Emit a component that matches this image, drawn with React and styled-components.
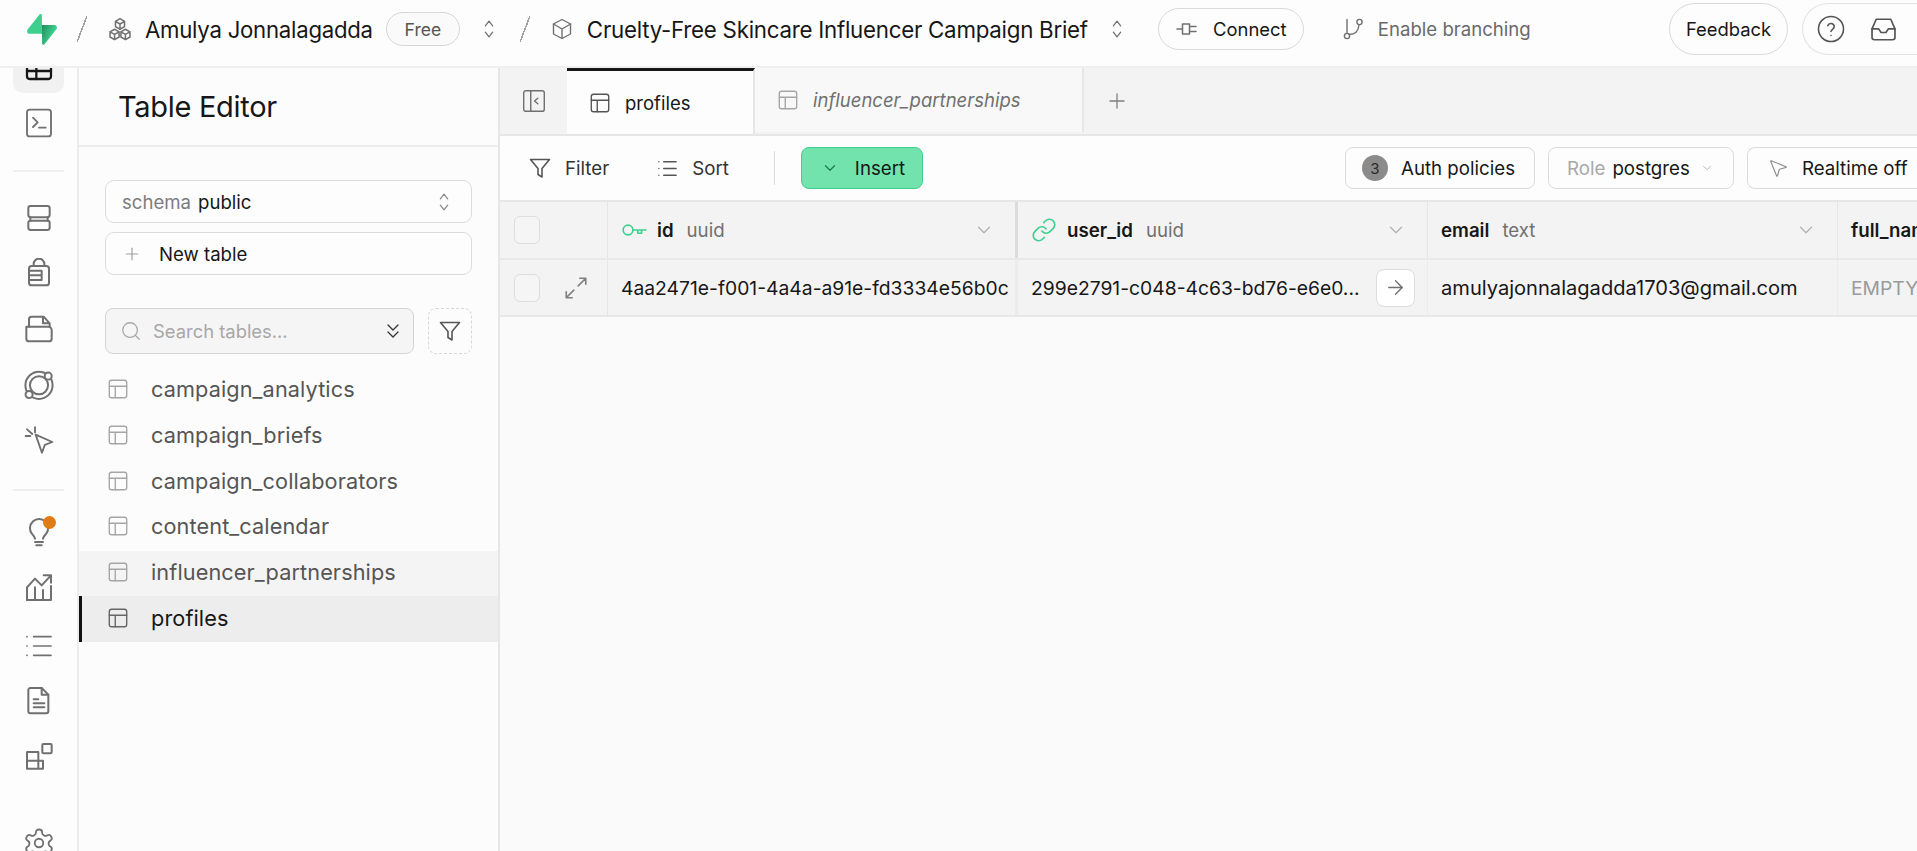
import React from "react";
import styled, { createGlobalStyle } from "styled-components";
import {
  ArrowRight,
  ChevronDown,
  ChevronsDown,
  Link,
  List,
  MousePointer2,
  Plus,
  Search,
} from "lucide-react";

const GlobalStyle = createGlobalStyle`
  html, body {
    margin: 0;
    height: 100%;
    overflow: hidden;
    background: #fcfcfc;
  }
  body {
    font-family: Inter, "Liberation Sans", sans-serif;
    color: #171717;
    -webkit-font-smoothing: antialiased;
  }
  * { box-sizing: border-box; }
`;

const Page = styled.div`
  width: 1917px;
  height: 851px;
  display: flex;
  flex-direction: column;
  overflow: hidden;
`;

const TopBar = styled.header`
  position: relative;
  z-index: 2;
  flex: 0 0 68px;
  display: flex;
  align-items: center;
  padding: 0 0 8px 27px;
  background: #fdfdfd;
  border-bottom: 2px solid #efefef;
`;

const Slash = styled.span`
  width: 10px;
  height: 26px;
  margin-left: ${(p) => p.$ml}px;
  background: linear-gradient(
    to bottom right,
    transparent 46%,
    #a0a0a0 46%,
    #a0a0a0 54%,
    transparent 54%
  );
`;

const Crumb = styled.span`
  font-size: ${(p) => p.$size}px;
  letter-spacing: -0.25px;
  white-space: nowrap;
  margin-left: ${(p) => p.$ml}px;
`;

const PlanPill = styled.span`
  height: 34px;
  width: 74px;
  margin-left: 13px;
  display: flex;
  align-items: center;
  justify-content: center;
  border: 1px solid #d6d6d6;
  border-radius: 17px;
  background: #fafafa;
  color: #555;
  font-size: 17.5px;
`;

const IconSlot = styled.span`
  display: inline-flex;
  flex-shrink: 0;
  margin-left: ${(p) => p.$ml || 0}px;
  color: ${(p) => p.$color || "#707070"};
`;

const Pill = styled.button`
  height: ${(p) => p.$h}px;
  width: ${(p) => p.$w}px;
  margin-left: ${(p) => p.$ml}px;
  display: flex;
  align-items: center;
  justify-content: center;
  gap: 14px;
  padding: 0;
  border: 1px solid #d9d9d9;
  border-radius: 26px;
  background: #fdfdfd;
  color: #171717;
  font: inherit;
  font-size: 18.4px;
`;

const BranchLabel = styled.span`
  margin-left: 13px;
  color: #6a6a6a;
  font-size: 18.6px;
  white-space: nowrap;
`;

const RightCluster = styled.div`
  margin-left: 14px;
  width: 115px;
  height: 52px;
  display: flex;
  align-items: center;
  gap: 23px;
  padding-left: 13px;
  border: 1px solid #e2e2e2;
  border-right: none;
  border-radius: 26px 0 0 26px;
`;

const Spacer = styled.div`
  flex: 1;
`;

const Body = styled.div`
  flex: 1;
  display: flex;
  min-height: 0;
`;

const Nav = styled.nav`
  flex: 0 0 79px;
  border-right: 2px solid #ececec;
  background: #fdfdfd;
  overflow: hidden;
`;

const NavInner = styled.div`
  margin-top: -27px;
  padding: 0 13px;
  display: flex;
  flex-direction: column;
  gap: 4px;
`;

const NavItem = styled.div`
  flex: 0 0 52px;
  height: 52px;
  display: flex;
  align-items: center;
  justify-content: center;
  position: relative;
  border-radius: 10px;
  color: ${(p) => (p.$active ? "#171717" : "#707070")};
  background: ${(p) => (p.$active ? "#f1f1f1" : "transparent")};
  margin-top: ${(p) => p.$mt || 0}px;
`;

const NavDivider = styled.div`
  height: 2px;
  background: #efefef;
  margin: ${(p) => p.$mt}px 0 ${(p) => p.$mb}px;
`;

const Badge = styled.span`
  position: absolute;
  top: 8px;
  left: 30px;
  width: 13px;
  height: 13px;
  border-radius: 50%;
  background: #e17b17;
`;

const Side = styled.aside`
  flex: 0 0 421px;
  background: #fcfcfc;
  border-right: 2px solid #e6e6e6;
`;

const SideHead = styled.div`
  height: 79px;
  display: flex;
  align-items: center;
  padding-left: 39px;
  border-bottom: 2px solid #ededed;
  font-size: 29px;
  letter-spacing: -0.3px;
`;

const SideControls = styled.div`
  padding: 33px 26px 0;
  display: flex;
  flex-direction: column;
`;

const FieldBox = styled.div`
  height: 43px;
  display: flex;
  align-items: center;
  border: 1px solid #dcdcdc;
  border-radius: 9px;
  background: #fdfdfd;
  margin-bottom: 9px;
  font-size: 18.6px;
  padding: 0 16px;
`;

const Muted = styled.span`
  color: #7c7c7c;
  margin-right: 7px;
`;

const FieldLabel = styled.span`
  margin-left: ${(p) => p.$ml}px;
`;

const SearchRow = styled.div`
  display: flex;
  gap: 14px;
  margin-top: 24px;
`;

const SearchBox = styled.div`
  flex: 0 0 309px;
  height: 46px;
  display: flex;
  align-items: center;
  padding: 0 8px 0 14px;
  border: 1px solid #d4d4d4;
  border-radius: 8px;
  background: #f5f5f5;
  color: #a8a8a8;
  font-size: 18.4px;
`;

const DashedButton = styled.div`
  width: 44px;
  height: 46px;
  display: flex;
  align-items: center;
  justify-content: center;
  border: 1px dashed #d8d8d8;
  border-radius: 8px;
  color: #555;
`;

const TableList = styled.ul`
  list-style: none;
  margin: 14px 0 0;
  padding: 0;
`;

const TableItem = styled.li`
  height: 45.7px;
  display: flex;
  align-items: center;
  gap: 22px;
  padding: 0 0 3px ${(p) => (p.$active ? 25 : 28)}px;
  font-size: 21.7px;
  letter-spacing: 0.1px;
  color: ${(p) => (p.$active ? "#171717" : "#555")};
  background: ${(p) =>
    p.$active ? "#ededed" : p.$hover ? "#f4f4f4" : "transparent"};
  border-left: ${(p) => (p.$active ? "3px solid #111" : "none")};
`;

const Main = styled.main`
  flex: 1;
  min-width: 0;
  display: flex;
  flex-direction: column;
  background: #fafafa;
`;

const TabBar = styled.div`
  flex: 0 0 66px;
  display: flex;
  background: #f3f3f3;
  border-bottom: 2px solid #e6e6e6;
`;

const CollapseTab = styled.div`
  flex: 0 0 67px;
  display: flex;
  align-items: center;
  justify-content: center;
  color: #707070;
`;

const Tab = styled.div`
  flex: 0 0 ${(p) => p.$w}px;
  height: ${(p) => (p.$active ? 66 : 64)}px;
  display: flex;
  align-items: center;
  gap: 14px;
  padding-left: 22px;
  font-size: 18.5px;
  background: ${(p) => (p.$active ? "#fdfdfd" : "#f8f8f8")};
  color: ${(p) => (p.$active ? "#171717" : "#707070")};
  font-style: ${(p) => (p.$active ? "normal" : "italic")};
  border-top: ${(p) => (p.$active ? "3px solid #171717" : "none")};
  border-right: 2px solid #e6e6e6;
`;

const AddTab = styled.div`
  flex: 0 0 66px;
  display: flex;
  align-items: center;
  justify-content: center;
  color: #808080;
`;

const Toolbar = styled.div`
  flex: 0 0 66px;
  display: flex;
  align-items: center;
  padding-left: 28px;
  background: #fdfdfd;
  border-bottom: 2px solid #e6e6e6;
`;

const ToolText = styled.div`
  display: flex;
  align-items: center;
  gap: 13px;
  font-size: 18.7px;
  color: #333;
  margin-right: ${(p) => p.$mr}px;
`;

const ToolDivider = styled.div`
  width: 1px;
  height: 34px;
  background: #dcdcdc;
`;

const InsertButton = styled.button`
  margin-left: 26px;
  width: 122px;
  height: 42px;
  display: flex;
  align-items: center;
  gap: 16px;
  padding: 0 0 0 19px;
  border: 1px solid #3ecf8e;
  border-radius: 8px;
  background: #72e3ad;
  color: #171717;
  font: inherit;
  font-size: 18.7px;
`;

const ToolButton = styled.div`
  width: ${(p) => p.$w}px;
  height: 42px;
  display: flex;
  align-items: center;
  gap: 13px;
  padding-left: ${(p) => p.$pl}px;
  margin-left: 13px;
  border: 1px solid #dcdcdc;
  border-right: ${(p) => (p.$open ? "none" : "1px solid #dcdcdc")};
  border-radius: ${(p) => (p.$open ? "8px 0 0 8px" : "8px")};
  background: #fdfdfd;
  font-size: 18.7px;
  white-space: nowrap;
`;

const Count = styled.span`
  width: 26px;
  height: 26px;
  display: flex;
  align-items: center;
  justify-content: center;
  border-radius: 50%;
  background: #8b8b8b;
  color: #2a2a2a;
  font-size: 15px;
`;

const RoleText = styled.span`
  color: #171717;
  span {
    color: #a8a8a8;
    margin-right: 7px;
  }
`;

const GridRow = styled.div`
  flex: 0 0 ${(p) => p.$h}px;
  display: grid;
  grid-template-columns: 108px 410px 410px 410px 410px;
  background: #f3f3f3;
  border-bottom: 2px solid #e8e8e8;
`;

const SelectCell = styled.div`
  display: flex;
  align-items: center;
  gap: 23px;
  padding-left: 14px;
  border-right: 1px solid #e6e6e6;
  color: #808080;
`;

const Check = styled.span`
  width: 26px;
  height: 28px;
  border: 1px solid #dedede;
  border-radius: 6px;
  background: #f5f5f5;
`;

const HeadCell = styled.div`
  display: flex;
  align-items: center;
  gap: 10px;
  padding: 0 20px 0 13px;
  border-right: ${(p) => (p.$thick ? "3px solid #dcdcdc" : "1px solid #e6e6e6")};
  font-size: 18.7px;
  white-space: nowrap;
  overflow: hidden;
`;

const ColName = styled.b`
  font-weight: 600;
  color: #171717;
`;

const ColType = styled.span`
  margin-left: 3px;
  color: #707070;
  flex: 1;
`;

const DataCell = styled.div`
  display: flex;
  align-items: center;
  justify-content: space-between;
  padding: 0 12px 0 13px;
  border-right: ${(p) => (p.$thick ? "3px solid #ececec" : "1px solid #ececec")};
  font-size: ${(p) => p.$size || 19.3}px;
  color: ${(p) => (p.$empty ? "#9a9a9a" : "#171717")};
  white-space: nowrap;
  overflow: hidden;
`;

const JumpButton = styled.span`
  flex: 0 0 39px;
  height: 38px;
  display: flex;
  align-items: center;
  justify-content: center;
  border: 1px solid #dcdcdc;
  border-radius: 8px;
  background: #fff;
  color: #707070;
`;

const Glyph = ({ size = 26, width = 1.6, children, fill = "none" }) => (
  <svg
    width={size}
    height={size}
    viewBox="0 0 24 24"
    fill={fill}
    stroke="currentColor"
    strokeWidth={width}
    strokeLinecap="round"
    strokeLinejoin="round"
  >
    {children}
  </svg>
);

// table glyph used in sidebar, tabs and nav
const TableGlyph = ({ size = 22, width = 1.5 }) => (
  <Glyph size={size} width={width}>
    <rect x="2.5" y="2.5" width="19" height="19" rx="2.5" />
    <path d="M2.5 9h19M9 9v12.5" />
  </Glyph>
);

const Updown = ({ size = 22 }) => (
  <Glyph size={size} width={1.4}>
    <path d="M8 8.5 12 3.5l4 5M8 15.5l4 5 4-5" />
  </Glyph>
);

const FilterGlyph = ({ size = 25 }) => (
  <Glyph size={size} width={1.6}>
    <path d="M2.5 3.5h19l-7.5 9v8.5l-4-2.5v-6z" />
  </Glyph>
);

const Logo = () => (
  <svg width="30" height="31" viewBox="0 0 109 113">
    <defs>
      <linearGradient id="bolt" x1="54" y1="55" x2="95" y2="72" gradientUnits="userSpaceOnUse">
        <stop offset="0" stopColor="#249361" />
        <stop offset="1" stopColor="#3ecf8e" />
      </linearGradient>
    </defs>
    <path
      d="M63.7 110.3c-2.9 3.6-8.7 1.6-8.7-3L54 40.1h45.2c8.2 0 12.8 9.5 7.7 15.9z"
      fill="url(#bolt)"
    />
    <path
      d="M45.3 2.1c2.9-3.6 8.7-1.6 8.7 3l.5 67.2H9.8c-8.2 0-12.8-9.5-7.7-15.9z"
      fill="#3ecf8e"
    />
  </svg>
);

const OrgGlyph = () => (
  <Glyph size={26} width={1.4}>
    <path d="M12 2.5 16.2 5v4.8L12 12.2 7.8 9.8V5zM7.8 5 12 7.4 16.2 5M12 7.4v4.8" />
    <path d="M7 12.2 11.2 14.6v4.8L7 21.8l-4.2-2.4v-4.8zM2.8 14.6 7 17l4.2-2.4M7 17v4.8" />
    <path d="M17 12.2l4.2 2.4v4.8L17 21.8l-4.2-2.4v-4.8zM12.8 14.6 17 17l4.2-2.4M17 17v4.8" />
  </Glyph>
);

const BoxGlyph = () => (
  <Glyph size={24} width={1.4}>
    <path d="M12 2.5 20.5 7v10L12 21.5 3.5 17V7z" />
    <path d="M3.5 7 12 12l8.5-5M12 12v9.5" />
  </Glyph>
);

const PlugGlyph = () => (
  <Glyph size={24} width={1.5}>
    <path d="M2 12h5M7.5 7h7v10h-7zM14.5 9.5H21M14.5 14.5H21" />
  </Glyph>
);

const BranchGlyph = () => (
  <Glyph size={24} width={1.4}>
    <circle cx="6" cy="19" r="2.6" />
    <circle cx="18.5" cy="5" r="2.6" />
    <path d="M6 16.4V2.5M8 17.5c6 0 9.5-4 10-9.8" />
  </Glyph>
);

const HelpGlyph = () => (
  <Glyph size={30} width={1.25}>
    <circle cx="12" cy="12" r="10" />
    <path d="M9.4 9.3a2.7 2.7 0 0 1 5.2.9c0 1.8-2.6 2.2-2.6 3.8" />
    <path d="M12 17.2h.01" />
  </Glyph>
);

const InboxGlyph = () => (
  <Glyph size={29} width={1.4}>
    <path d="M6 3.5h12l3.5 8v7a2 2 0 0 1-2 2h-15a2 2 0 0 1-2-2v-7z" />
    <path d="M2.5 11.5H8l2 3h4l2-3h5.5" />
  </Glyph>
);

const KeyGlyph = () => (
  <Glyph size={26} width={1.5}>
    <circle cx="6.5" cy="12" r="4.5" />
    <path d="M11 12h12M15.5 12v3h3.5v-3" />
  </Glyph>
);

const ExpandGlyph = () => (
  <Glyph size={26} width={1.5}>
    <path d="M14 10l7-7M15.5 3H21v5.5M10 14l-7 7M3 15.5V21h5.5" />
  </Glyph>
);

const CollapseGlyph = () => (
  <Glyph size={26} width={1.3}>
    <rect x="2.5" y="2.5" width="19" height="19" rx="2" />
    <path d="M9 2.5v19M15.5 9.5l-3 2.5 3 2.5" />
  </Glyph>
);

function TableEditorGlyph() {
  return (
    <Glyph size={32} width={1.7}>
      <rect x="3" y="3" width="18" height="18" rx="2" />
      <path d="M3 9h18M3 15h18M10 9v12" />
    </Glyph>
  );
}

const navIcons = {
  table: <TableEditorGlyph />,
  sql: (
    <Glyph size={32} width={1.4}>
      <rect x="3" y="2" width="18" height="20" rx="2" />
      <path d="M7.5 8l3.5 3.5-3.5 3.5M12 15.5h5" />
    </Glyph>
  ),
  database: (
    <Glyph size={32} width={1.5}>
      <rect x="4" y="3" width="16" height="8.4" rx="1.6" />
      <rect x="4" y="14" width="16" height="7" rx="1.6" />
      <path d="M5.5 11.4v2.6M18.5 11.4v2.6" />
    </Glyph>
  ),
  lock: (
    <Glyph size={32} width={1.5}>
      <rect x="4.5" y="6" width="15" height="14.5" rx="2" />
      <path d="M8 6V4.5a4 4 0 0 1 8 0V6M4.5 9.5H14v7H4.5M4.5 13h9.5" />
    </Glyph>
  ),
  storage: (
    <Glyph size={32} width={1.5}>
      <path d="M2.5 9.5h16.5a2.5 2.5 0 0 1 2.5 2.5v6.5a2 2 0 0 1-2 2h-15a2 2 0 0 1-2-2z" />
      <path d="M4.5 9.5V4a2 2 0 0 1 2-2h9l4.5 5v2.5M15 2v5h5" />
    </Glyph>
  ),
  edge: (
    <Glyph size={34} width={1.4}>
      <circle cx="12" cy="11.5" r="9.6" />
      <circle cx="12" cy="11.5" r="6.4" />
      <circle cx="18.5" cy="5" r="2.5" fill="#fdfdfd" />
      <circle cx="5" cy="18" r="2.5" fill="#fdfdfd" />
    </Glyph>
  ),
  realtime: (
    <Glyph size={32} width={1.4}>
      <path d="M9.5 6.5 22 12l-5.6 2.1-2.2 6z" />
      <path d="M3 2.5 7 6M9 .8v4M2 7.5h3.5" />
    </Glyph>
  ),
  report: (
    <Glyph size={32} width={1.5}>
      <path d="M3 19.5V10l6-6.5 5 5 7-7.5M15.5 1H21v5.5" />
      <path d="M3 19.5h18V9M9 19.5V10M15 19.5V12" />
    </Glyph>
  ),
  logs: <List size={32} strokeWidth={1.3} />,
  docs: (
    <Glyph size={32} width={1.5}>
      <path d="M5.5 1.5H14l5 5V19a1.5 1.5 0 0 1-1.5 1.5h-12A1.5 1.5 0 0 1 4 19V3a1.5 1.5 0 0 1 1.5-1.5z" />
      <path d="M14 1.5v5h5M8 10h3.5M8 13h8M8 16h8" />
    </Glyph>
  ),
  ext: (
    <Glyph size={32} width={1.5}>
      <path d="M3 7.5h8.5V20H3zM3 14h12v6h-3.5" />
      <rect x="14.5" y="1.5" width="7" height="7" rx="0.8" />
    </Glyph>
  ),
  gear: (
    <Glyph size={34} width={1.3}>
      <path d="M12.2 2.5h-.4a2 2 0 0 0-2 2v.2a2 2 0 0 1-1 1.7l-.4.3a2 2 0 0 1-2 0l-.2-.1a2 2 0 0 0-2.7.7l-.2.4a2 2 0 0 0 .7 2.7l.2.1a2 2 0 0 1 1 1.7v.5a2 2 0 0 1-1 1.7l-.2.1a2 2 0 0 0-.7 2.7l.2.4a2 2 0 0 0 2.7.7l.2-.1a2 2 0 0 1 2 0l.4.3a2 2 0 0 1 1 1.7v.2a2 2 0 0 0 2 2h.4a2 2 0 0 0 2-2v-.2a2 2 0 0 1 1-1.7l.4-.3a2 2 0 0 1 2 0l.2.1a2 2 0 0 0 2.7-.7l.2-.4a2 2 0 0 0-.7-2.7l-.2-.1a2 2 0 0 1-1-1.7v-.5a2 2 0 0 1 1-1.7l.2-.1a2 2 0 0 0 .7-2.7l-.2-.4a2 2 0 0 0-2.7-.7l-.2.1a2 2 0 0 1-2 0l-.4-.3a2 2 0 0 1-1-1.7v-.2a2 2 0 0 0-2-2z" />
      <circle cx="12" cy="12" r="3" />
    </Glyph>
  ),
};

const tables = [
  "campaign_analytics",
  "campaign_briefs",
  "campaign_collaborators",
  "content_calendar",
];

const App = () => {
  return (
    <Page>
      <GlobalStyle />
      <TopBar>
        <Logo />
        <Slash $ml={20} />
        <IconSlot $ml={20}>
          <OrgGlyph />
        </IconSlot>
        <Crumb $ml={12} $size={22.2}>
          Amulya Jonnalagadda
        </Crumb>
        <PlanPill>Free</PlanPill>
        <IconSlot $ml={18}>
          <Updown />
        </IconSlot>
        <Slash $ml={20} />
        <IconSlot $ml={20}>
          <BoxGlyph />
        </IconSlot>
        <Crumb $ml={13} $size={22.3}>
          Cruelty-Free Skincare Influencer Campaign Brief
        </Crumb>
        <IconSlot $ml={18}>
          <Updown />
        </IconSlot>
        <Pill $h={42} $w={146} $ml={30}>
          <IconSlot>
            <PlugGlyph />
          </IconSlot>
          Connect
        </Pill>
        <IconSlot $ml={37}>
          <BranchGlyph />
        </IconSlot>
        <BranchLabel>Enable branching</BranchLabel>
        <Spacer />
        <Pill $h={52} $w={119} $ml={0}>
          Feedback
        </Pill>
        <RightCluster>
          <IconSlot $color="#555">
            <HelpGlyph />
          </IconSlot>
          <IconSlot $color="#555">
            <InboxGlyph />
          </IconSlot>
        </RightCluster>
      </TopBar>
      <Body>
        <Nav>
          <NavInner>
            <NavItem $active>{navIcons.table}</NavItem>
            <NavItem>{navIcons.sql}</NavItem>
            <NavDivider $mt={17} $mb={16} />
            <NavItem>{navIcons.database}</NavItem>
            <NavItem>{navIcons.lock}</NavItem>
            <NavItem>{navIcons.storage}</NavItem>
            <NavItem>{navIcons.edge}</NavItem>
            <NavItem>{navIcons.realtime}</NavItem>
            <NavDivider $mt={17} $mb={13} />
            <NavItem>
              <Glyph size={32} width={1.5}>
                <path d="M9 15.5c-.4-1.5-1.2-2.5-2.2-3.6A6.8 6.8 0 1 1 17.2 12c-1 1-1.8 2-2.2 3.5M9 18h6M10 20.5h4" />
              </Glyph>
              <Badge />
            </NavItem>
            <NavItem>{navIcons.report}</NavItem>
            <NavItem>{navIcons.logs}</NavItem>
            <NavItem>{navIcons.docs}</NavItem>
            <NavItem>{navIcons.ext}</NavItem>
            <NavItem $mt={29}>{navIcons.gear}</NavItem>
          </NavInner>
        </Nav>
        <Side>
          <SideHead>Table Editor</SideHead>
          <SideControls>
            <FieldBox>
              <Muted>schema</Muted>
              public
              <Spacer />
              <IconSlot $color="#8a8a8a">
                <Updown />
              </IconSlot>
            </FieldBox>
            <FieldBox>
              <IconSlot $color="#a0a0a0">
                <Plus size={20} strokeWidth={1.4} />
              </IconSlot>
              <FieldLabel $ml={17}>New table</FieldLabel>
            </FieldBox>
            <SearchRow>
              <SearchBox>
                <IconSlot $color="#a8a8a8">
                  <Search size={22} strokeWidth={1.4} />
                </IconSlot>
                <FieldLabel $ml={11}>Search tables...</FieldLabel>
                <Spacer />
                <IconSlot $color="#333">
                  <ChevronsDown size={24} strokeWidth={1.3} />
                </IconSlot>
              </SearchBox>
              <DashedButton>
                <FilterGlyph size={24} />
              </DashedButton>
            </SearchRow>
          </SideControls>
          <TableList>
            {tables.map((name) => (
              <TableItem key={name}>
                <IconSlot $color="#a6a6a6">
                  <TableGlyph />
                </IconSlot>
                {name}
              </TableItem>
            ))}
            <TableItem $hover>
              <IconSlot $color="#a6a6a6">
                <TableGlyph />
              </IconSlot>
              influencer_partnerships
            </TableItem>
            <TableItem $active>
              <IconSlot $color="#666">
                <TableGlyph />
              </IconSlot>
              profiles
            </TableItem>
          </TableList>
        </Side>
        <Main>
          <TabBar>
            <CollapseTab>
              <CollapseGlyph />
            </CollapseTab>
            <Tab $active $w={188}>
              <IconSlot $color="#555">
                <TableGlyph />
              </IconSlot>
              profiles
            </Tab>
            <Tab $w={329}>
              <IconSlot $color="#a6a6a6">
                <TableGlyph />
              </IconSlot>
              influencer_partnerships
            </Tab>
            <AddTab>
              <Plus size={24} strokeWidth={1.3} />
            </AddTab>
          </TabBar>
          <Toolbar>
            <ToolText $mr={47}>
              <IconSlot $color="#555">
                <FilterGlyph size={24} />
              </IconSlot>
              Filter
            </ToolText>
            <ToolText $mr={45}>
              <IconSlot $color="#555">
                <List size={23} strokeWidth={1.4} />
              </IconSlot>
              Sort
            </ToolText>
            <ToolDivider />
            <InsertButton>
              <IconSlot $color="#1d7a50">
                <ChevronDown size={18} strokeWidth={1.6} />
              </IconSlot>
              Insert
            </InsertButton>
            <Spacer />
            <ToolButton $w={190} $pl={16}>
              <Count>3</Count>
              Auth policies
            </ToolButton>
            <ToolButton $w={186} $pl={18}>
              <RoleText>
                <span>Role</span>postgres
              </RoleText>
              <IconSlot $color="#b0b0b0" $ml={-3}>
                <ChevronDown size={14} strokeWidth={1.5} />
              </IconSlot>
            </ToolButton>
            <ToolButton $w={170} $pl={19} $open>
              <IconSlot $color="#8a8a8a">
                <MousePointer2 size={22} strokeWidth={1.2} />
              </IconSlot>
              Realtime off
            </ToolButton>
          </Toolbar>
          <GridRow $h={58}>
            <SelectCell>
              <Check />
            </SelectCell>
            <HeadCell $thick>
              <IconSlot $color="#3ecf8e">
                <KeyGlyph />
              </IconSlot>
              <ColName>id</ColName>
              <ColType>uuid</ColType>
              <IconSlot $color="#b0b0b0">
                <ChevronDown size={22} strokeWidth={1.3} />
              </IconSlot>
            </HeadCell>
            <HeadCell>
              <IconSlot $color="#3ecf8e">
                <Link size={26} strokeWidth={1.5} />
              </IconSlot>
              <ColName>user_id</ColName>
              <ColType>uuid</ColType>
              <IconSlot $color="#b0b0b0">
                <ChevronDown size={22} strokeWidth={1.3} />
              </IconSlot>
            </HeadCell>
            <HeadCell>
              <ColName>email</ColName>
              <ColType>text</ColType>
              <IconSlot $color="#b0b0b0">
                <ChevronDown size={22} strokeWidth={1.3} />
              </IconSlot>
            </HeadCell>
            <HeadCell>
              <ColName>full_name</ColName>
            </HeadCell>
          </GridRow>
          <GridRow $h={57}>
            <SelectCell>
              <Check />
              <ExpandGlyph />
            </SelectCell>
            <DataCell $thick>4aa2471e-f001-4a4a-a91e-fd3334e56b0c</DataCell>
            <DataCell>
              299e2791-c048-4c63-bd76-e6e0...
              <JumpButton>
                <ArrowRight size={23} strokeWidth={1.4} />
              </JumpButton>
            </DataCell>
            <DataCell $size={20.1}>amulyajonnalagadda1703@gmail.com</DataCell>
            <DataCell $empty>EMPTY</DataCell>
          </GridRow>
        </Main>
      </Body>
    </Page>
  );
};

export default App;
